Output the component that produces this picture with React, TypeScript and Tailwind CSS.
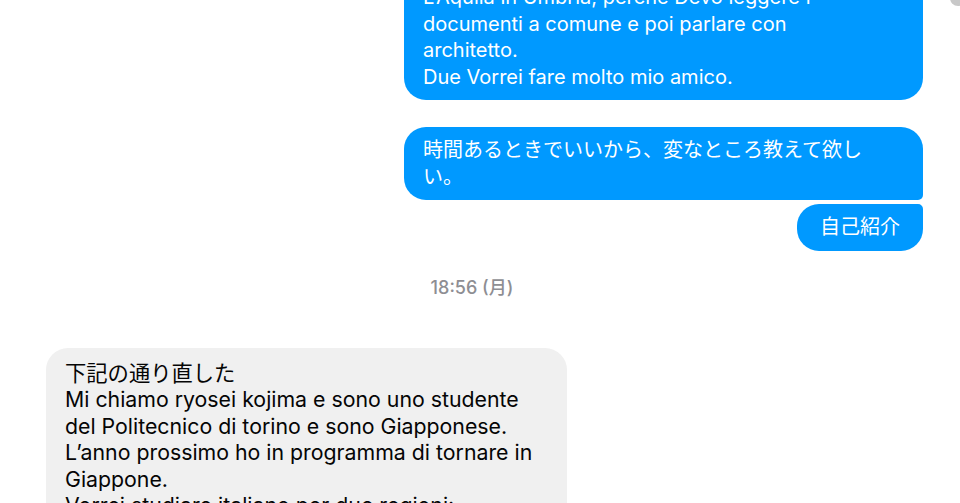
import React from "react";

const font = { fontFamily: '"Inter", "Noto Sans CJK JP", sans-serif' };

function Lines({ lines }: { lines: string[] }) {
  return (
    <>
      {lines.map((l, i) => (
        <div key={i} className="whitespace-nowrap">
          {l}
        </div>
      ))}
    </>
  );
}

export default function App() {
  return (
    <div
      className="relative w-[960px] h-[503px] overflow-hidden bg-white text-[20px] leading-[26.5px]"
      style={font}
    >
      <div className="absolute right-[-6px] top-[-10px] w-[16px] h-[16px] rounded-full bg-[#c8c8c8]" />
      <div className="flex flex-col items-end pr-[37px] -mt-[26px]">
        <div className="w-[519px] bg-[#0099ff] text-white rounded-[22px] px-[19px] py-[10px]">
          <Lines
            lines={[
              "L’Aquila in Umbria, perche Devo leggere i",
              "documenti a comune e poi parlare con",
              "architetto.",
              "Due Vorrei fare molto mio amico.",
            ]}
          />
        </div>
        <div className="mt-[27px] w-[519px] bg-[#0099ff] text-white rounded-[22px] rounded-br-[5px] px-[19px] py-[10px]">
          <Lines
            lines={[
              "時間あるときでいいから、変なところ教えて欲し",
              "い。",
            ]}
          />
        </div>
        <div className="mt-[4px] bg-[#0099ff] text-white rounded-[22px] rounded-tr-[5px] px-[23px] py-[10px]">
          自己紹介
        </div>
      </div>
      <div className="w-[944px] mt-[24px] flex justify-center">
        <span className="text-[18px] leading-[26px] text-[#8e8e93] font-medium">18:56 (月)</span>
      </div>
      <div className="mt-[47px] pl-[46px]">
        <div className="w-[521px] bg-[#f0f0f0] text-[#050505] text-[21.3px] rounded-[22px] px-[19px] pt-[12px] pb-[10px]">
          <Lines
            lines={[
              "下記の通り直した",
              "Mi chiamo ryosei kojima e sono uno studente",
              "del Politecnico di torino e sono Giapponese.",
              "L’anno prossimo ho in programma di tornare in",
              "Giappone.",
              "Vorrei studiare italiano per due regioni:",
              "",
            ]}
          />
        </div>
      </div>
    </div>
  );
}
